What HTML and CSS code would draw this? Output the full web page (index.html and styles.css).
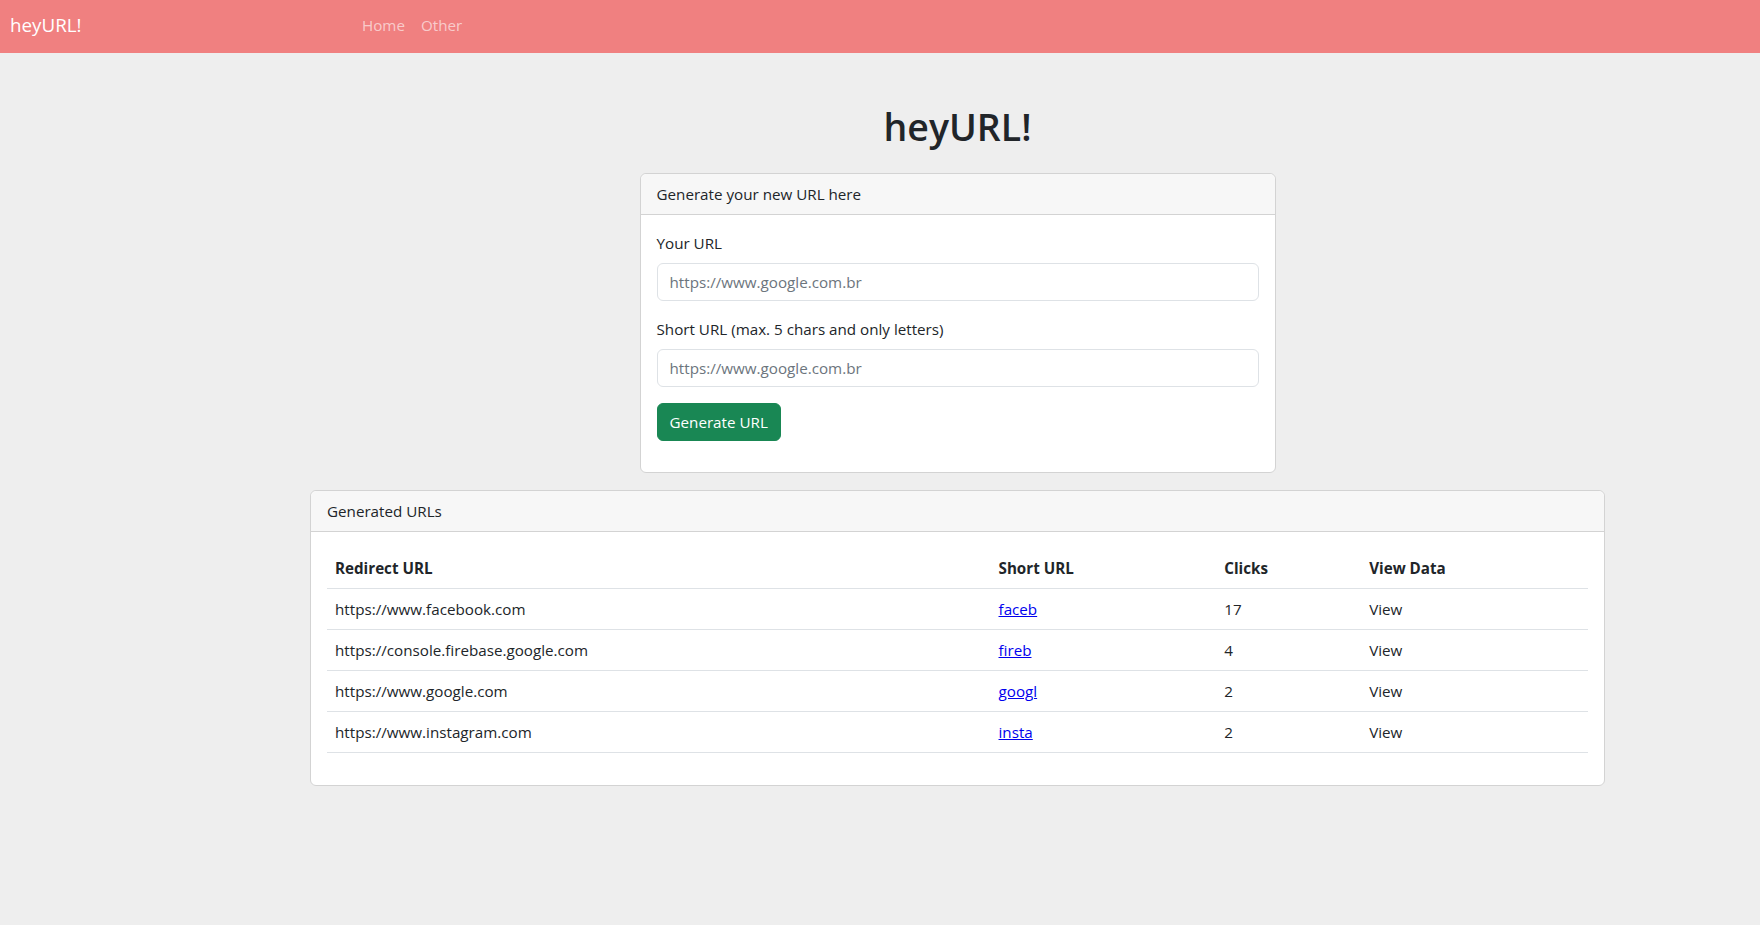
FILE: index.html
```html
<!DOCTYPE html>
<html lang="en">
<head>
<meta charset="utf-8">
<title>heyURL!</title>
<link rel="stylesheet" href="styles.css">
</head>
<body>
<nav class="navbar">
  <a class="brand" href="#">heyURL!</a>
  <ul class="nav-links">
    <li><a href="#">Home</a></li>
    <li><a href="#">Other</a></li>
  </ul>
</nav>
<main class="main">
  <h1 class="title">heyURL!</h1>
  <section class="card form-card">
    <div class="card-header">Generate your new URL here</div>
    <div class="card-body">
      <form class="url-form">
        <div class="field">
          <label class="label" for="url">Your URL</label>
          <input class="input" id="url" type="text" placeholder="https://www.google.com.br">
        </div>
        <div class="field">
          <label class="label" for="short">Short URL (max. 5 chars and only letters)</label>
          <input class="input" id="short" type="text" placeholder="https://www.google.com.br">
        </div>
        <button class="btn" type="button">Generate URL</button>
      </form>
    </div>
  </section>
  <section class="card table-card">
    <div class="card-header">Generated URLs</div>
    <div class="card-body">
      <table class="table">
        <colgroup>
          <col class="c1"><col class="c2"><col class="c3"><col class="c4">
        </colgroup>
        <thead>
          <tr><th>Redirect URL</th><th>Short URL</th><th>Clicks</th><th>View Data</th></tr>
        </thead>
        <tbody>
          <tr><td>https://www.facebook.com</td><td><a href="#">faceb</a></td><td>17</td><td>View</td></tr>
          <tr><td>https://console.firebase.google.com</td><td><a href="#">fireb</a></td><td>4</td><td>View</td></tr>
          <tr><td>https://www.google.com</td><td><a href="#">googl</a></td><td>2</td><td>View</td></tr>
          <tr><td>https://www.instagram.com</td><td><a href="#">insta</a></td><td>2</td><td>View</td></tr>
        </tbody>
      </table>
    </div>
  </section>
</main>
</body>
</html>
```
FILE: styles.css
```css
* { box-sizing: border-box; }
html, body { margin: 0; padding: 0; }
body {
  background: #eeeeee;
  color: #212529;
  font-family: "Open Sans", "Noto Sans", sans-serif;
  font-size: 15.2px;
  line-height: 24px;
}
.navbar {
  height: 53px;
  background: #f08080;
  display: flex;
  align-items: center;
  padding: 0 10px 3px;
}
.brand {
  color: #fff;
  font-size: 18.8px;
  text-decoration: none;
  width: 344px;
}
.nav-links {
  list-style: none;
  margin: 0;
  padding: 0;
  display: flex;
}
.nav-links a {
  display: block;
  padding: 0 8px;
  color: rgba(255,255,255,0.6);
  text-decoration: none;
}
.main {
  margin: 0 155px 0 310px;
  display: flex;
  flex-direction: column;
  align-items: center;
}
.title {
  font-size: 37.5px;
  font-weight: 600;
  line-height: 48px;
  margin: 50px 0 22px;
}
.card {
  background: #fff;
  border: 1px solid #d3d3d3;
  border-radius: 6px;
}
.form-card { width: 636px; }
.table-card { width: 100%; margin-top: 17px; }
.card-header {
  background: #f7f7f7;
  border-bottom: 1px solid #d3d3d3;
  padding: 8px 16px;
  border-radius: 6px 6px 0 0;
}
.card-body { padding: 16px; }
.url-form { margin-bottom: 15px; }
.field { margin-bottom: 16px; }
.label { display: block; margin-bottom: 8px; }
.input {
  display: block;
  width: 100%;
  height: 38px;
  padding: 6px 12px;
  border: 1px solid #dee2e6;
  border-radius: 6px;
  font: inherit;
  color: #212529;
  background: #fff;
}
.input::placeholder { color: #6c757d; }
.btn {
  height: 38px;
  padding: 6px 12px;
  background: #198754;
  color: #fff;
  border: 1px solid #198754;
  border-radius: 6px;
  font: inherit;
  cursor: pointer;
}
.table {
  width: 100%;
  border-collapse: collapse;
  margin-bottom: 16px;
}
.c1 { width: 664px; }
.c2 { width: 226px; }
.c3 { width: 145px; }
.c4 { width: 227px; }
.table th, .table td {
  text-align: left;
  padding: 8px;
  border-bottom: 1px solid #dee2e6;
}
.table th { font-weight: 700; }
.table a { color: #0000ee; }
```
